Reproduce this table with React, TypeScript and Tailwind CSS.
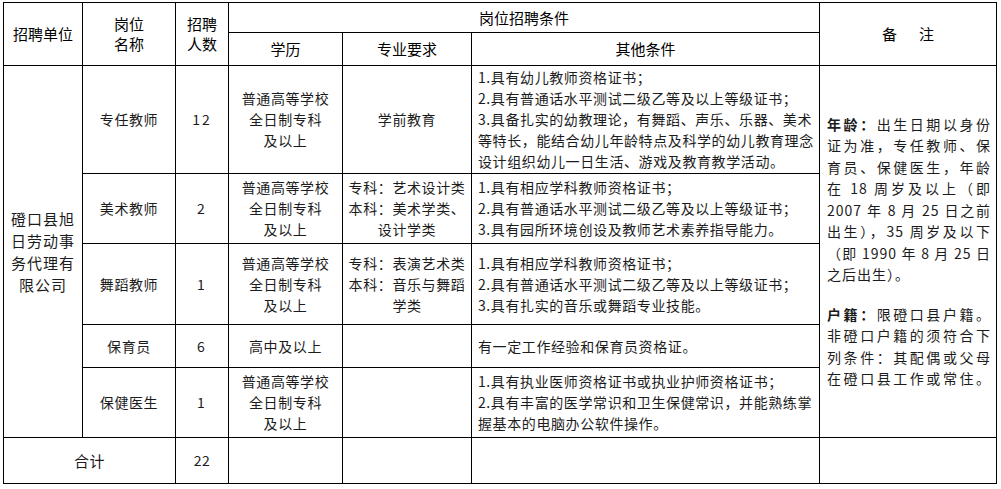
import React from 'react';

interface JobRow {
  post: string;
  count: string;
  edu: string[];
  major: string[];
  other: string[];
  height: string;
}

const jobs: JobRow[] = [
  {
    post: '专任教师',
    count: '12',
    edu: ['普通高等学校', '全日制专科', '及以上'],
    major: ['学前教育'],
    other: [
      '1.具有幼儿教师资格证书；',
      '2.具有普通话水平测试二级乙等及以上等级证书；',
      '3.具备扎实的幼教理论，有舞蹈、声乐、乐器、美术',
      '等特长，能结合幼儿年龄特点及科学的幼儿教育理念',
      '设计组织幼儿一日生活、游戏及教育教学活动。',
    ],
    height: 'h-[108px]',
  },
  {
    post: '美术教师',
    count: '2',
    edu: ['普通高等学校', '全日制专科', '及以上'],
    major: ['专科：艺术设计类', '本科：美术学类、', '设计学类'],
    other: [
      '1.具有相应学科教师资格证书；',
      '2.具有普通话水平测试二级乙等及以上等级证书；',
      '3.具有园所环境创设及教师艺术素养指导能力。',
    ],
    height: 'h-[70px]',
  },
  {
    post: '舞蹈教师',
    count: '1',
    edu: ['普通高等学校', '全日制专科', '及以上'],
    major: ['专科：表演艺术类', '本科：音乐与舞蹈', '学类'],
    other: [
      '1.具有相应学科教师资格证书；',
      '2.具有普通话水平测试二级乙等及以上等级证书；',
      '3.具有扎实的音乐或舞蹈专业技能。',
    ],
    height: 'h-[81px]',
  },
  {
    post: '保育员',
    count: '6',
    edu: ['高中及以上'],
    major: [],
    other: ['有一定工作经验和保育员资格证。'],
    height: 'h-[43px]',
  },
  {
    post: '保健医生',
    count: '1',
    edu: ['普通高等学校', '全日制专科', '及以上'],
    major: [],
    other: [
      '1.具有执业医师资格证书或执业护师资格证书；',
      '2.具有丰富的医学常识和卫生保健常识，并能熟练掌',
      '握基本的电脑办公软件操作。',
    ],
    height: 'h-[70px]',
  },
];

// 备注里每一行都撑满，最后一行除外
const ageLines = [
  '证为准，专任教师、保',
  '育员、保健医生，年龄',
  '在 18 周岁及以上（即',
  '2007 年 8 月 25 日之前',
  '出生），35 周岁及以下',
  '（即 1990 年 8 月 25 日',
];

const hukouLines = ['非磴口户籍的须符合下', '列条件：其配偶或父母', '在磴口县工作或常住。'];

const cell = 'border border-black p-0';
const justified = 'text-justify [text-align-last:justify]';

function Lines({ lines, className = '' }: { lines: string[]; className?: string }) {
  return (
    <div className={className}>
      {lines.map((line, i) => (
        <div key={i} className="whitespace-nowrap">
          {line}
        </div>
      ))}
    </div>
  );
}

export default function App() {
  return (
    <div className="w-[1001px] h-[489px] bg-white overflow-hidden pt-[2px] pl-[3px] font-['Noto_Sans_CJK_SC','Noto_Sans',sans-serif] text-[#1c1c1c]">
      <table className="border-collapse table-fixed w-[993px]">
        <colgroup>
          <col className="w-[79px]" />
          <col className="w-[93px]" />
          <col className="w-[53px]" />
          <col className="w-[114px]" />
          <col className="w-[129px]" />
          <col className="w-[348px]" />
          <col className="w-[177px]" />
        </colgroup>
        <thead className="text-[15px] leading-[20px] text-black">
          <tr>
            <th rowSpan={2} className={`${cell} font-normal`}>
              招聘单位
            </th>
            <th rowSpan={2} className={`${cell} font-normal`}>
              岗位
              <br />
              名称
            </th>
            <th rowSpan={2} className={`${cell} font-normal`}>
              招聘
              <br />
              人数
            </th>
            <th colSpan={3} className={`${cell} h-[30px] font-normal`}>
              岗位招聘条件
            </th>
            <th rowSpan={2} className={`${cell} font-normal`}>
              备<span className="inline-block w-[22px]" />注
            </th>
          </tr>
          <tr>
            <th className={`${cell} h-[33px] font-normal`}>学历</th>
            <th className={`${cell} font-normal`}>专业要求</th>
            <th className={`${cell} font-normal`}>其他条件</th>
          </tr>
        </thead>
        <tbody className="text-[14px] leading-[21px] tracking-[0.6px]">
          {jobs.map((job, i) => (
            <tr key={job.post}>
              {i === 0 && (
                <td rowSpan={5} className={`${cell} text-center text-[15px] leading-[22px] tracking-[1px]`}>
                  <Lines lines={['磴口县旭', '日劳动事', '务代理有', '限公司']} />
                </td>
              )}
              <td className={`${cell} ${job.height} text-center`}>{job.post}</td>
              <td className={`${cell} text-center tracking-[2px]`}>{job.count}</td>
              <td className={`${cell} text-center`}>
                <Lines lines={job.edu} />
              </td>
              <td className={`${cell} text-center`}>
                <Lines lines={job.major} />
              </td>
              <td className={`${cell} pl-[6px] text-left`}>
                <Lines lines={job.other} />
              </td>
              {i === 0 && (
                <td rowSpan={5} className={`${cell} pl-[7px] pr-[5px] tracking-[1px] leading-[21.5px]`}>
                  <div className={justified}>
                    <b className="font-bold">年龄：</b>出生日期以身份
                  </div>
                  {ageLines.map((line) => (
                    <div key={line} className={`${justified} whitespace-nowrap`}>
                      {line}
                    </div>
                  ))}
                  <div>之后出生）。</div>
                  <div className={`${justified} mt-[18px]`}>
                    <b className="font-bold">户籍：</b>限磴口县户籍。
                  </div>
                  {hukouLines.map((line) => (
                    <div key={line} className={`${justified} whitespace-nowrap`}>
                      {line}
                    </div>
                  ))}
                </td>
              )}
            </tr>
          ))}
          <tr>
            <td colSpan={2} className={`${cell} h-[46px] text-center text-[15px]`}>
              合计
            </td>
            <td className={`${cell} text-center`}>22</td>
            <td className={cell} />
            <td className={cell} />
            <td className={cell} />
            <td className={cell} />
          </tr>
        </tbody>
      </table>
    </div>
  );
}
